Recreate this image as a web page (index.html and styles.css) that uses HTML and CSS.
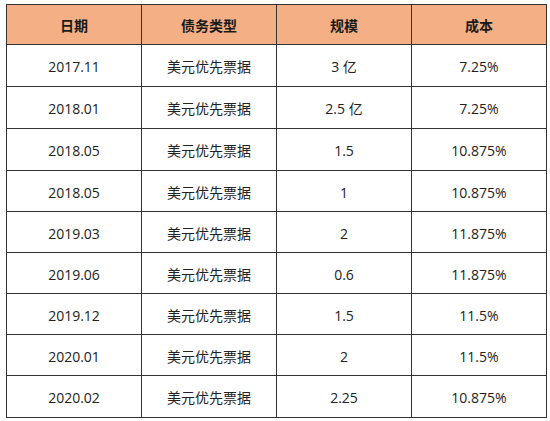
FILE: index.html
```html
<!DOCTYPE html>
<html lang="zh-CN">
<head>
<meta charset="utf-8">
<title>债务</title>
<link rel="stylesheet" href="styles.css">
</head>
<body>
<table class="debt">
  <thead>
    <tr class="head"><th>日期</th><th>债务类型</th><th>规模</th><th>成本</th></tr>
  </thead>
  <tbody>
    <tr class="r42"><td>2017.11</td><td>美元优先票据</td><td>3 亿</td><td>7.25%</td></tr>
    <tr class="r42"><td>2018.01</td><td>美元优先票据</td><td>2.5 亿</td><td>7.25%</td></tr>
    <tr class="r42"><td>2018.05</td><td>美元优先票据</td><td>1.5</td><td>10.875%</td></tr>
    <tr class="r41"><td>2018.05</td><td>美元优先票据</td><td>1</td><td>10.875%</td></tr>
    <tr class="r41"><td>2019.03</td><td>美元优先票据</td><td>2</td><td>11.875%</td></tr>
    <tr class="r41"><td>2019.06</td><td>美元优先票据</td><td>0.6</td><td>11.875%</td></tr>
    <tr class="r41"><td>2019.12</td><td>美元优先票据</td><td>1.5</td><td>11.5%</td></tr>
    <tr class="r41"><td>2020.01</td><td>美元优先票据</td><td>2</td><td>11.5%</td></tr>
    <tr class="r42"><td>2020.02</td><td>美元优先票据</td><td>2.25</td><td>10.875%</td></tr>
  </tbody>
</table>
</body>
</html>
```
FILE: styles.css
```css
html, body {
  margin: 0;
  background: #ffffff;
}
body {
  padding: 4px 0 0 6px;
  font-family: "Open Sans", "Noto Sans CJK SC", sans-serif;
  font-size: 14px;
  color: #222222;
}
.debt {
  border-collapse: collapse;
  table-layout: fixed;
  width: 541px;
}
.debt th,
.debt td {
  border: 1px solid #333333;
  text-align: center;
  vertical-align: middle;
  padding: 3px 0 0 0;
  line-height: 18px;
  width: 25%;
}
.debt th {
  background: #f4b084;
  font-weight: bold;
  color: #1a1a1a;
}
.head { height: 40px; }
.r42 { height: 42px; }
.r41 { height: 41px; }
```
